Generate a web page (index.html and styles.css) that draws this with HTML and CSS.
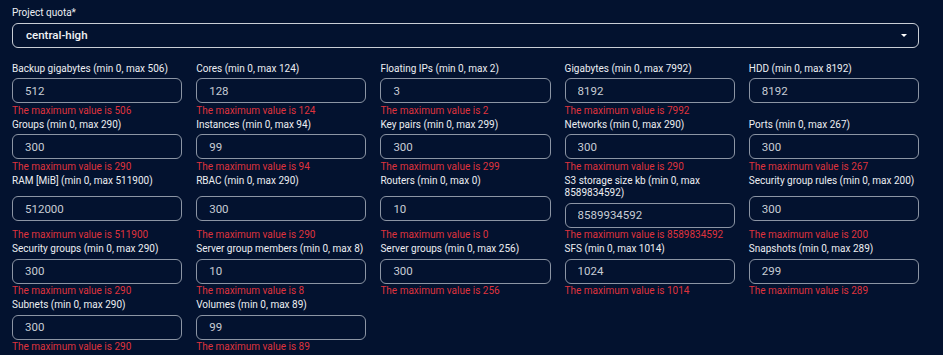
FILE: index.html
```html
<!DOCTYPE html>
<html lang="en">
<head>
    <meta charset="UTF-8">
    <meta name="viewport" content="width=device-width, initial-scale=1.0">
    <title>Project quota</title>
    <link rel="stylesheet" href="styles.css">
</head>
<body>

    <form class="quota-form">
        <label class="field-label">Project quota*</label>
        <div class="select">
            <span>central-high</span>
            <span class="caret"></span>
        </div>

        <div class="quota-grid">
            <div class="field"><label class="field-label">Backup gigabytes (min 0, max 506)</label><input class="num" value="512"><div class="error">The maximum value is 506</div></div>
            <div class="field"><label class="field-label">Cores (min 0, max 124)</label><input class="num" value="128"><div class="error">The maximum value is 124</div></div>
            <div class="field"><label class="field-label">Floating IPs (min 0, max 2)</label><input class="num" value="3"><div class="error">The maximum value is 2</div></div>
            <div class="field"><label class="field-label">Gigabytes (min 0, max 7992)</label><input class="num" value="8192"><div class="error">The maximum value is 7992</div></div>
            <div class="field"><label class="field-label">HDD (min 0, max 8192)</label><input class="num" value="8192"><div class="error"></div></div>

            <div class="field"><label class="field-label">Groups (min 0, max 290)</label><input class="num" value="300"><div class="error">The maximum value is 290</div></div>
            <div class="field"><label class="field-label">Instances (min 0, max 94)</label><input class="num" value="99"><div class="error">The maximum value is 94</div></div>
            <div class="field"><label class="field-label">Key pairs (min 0, max 299)</label><input class="num" value="300"><div class="error">The maximum value is 299</div></div>
            <div class="field"><label class="field-label">Networks (min 0, max 290)</label><input class="num" value="300"><div class="error">The maximum value is 290</div></div>
            <div class="field"><label class="field-label">Ports (min 0, max 267)</label><input class="num" value="300"><div class="error">The maximum value is 267</div></div>

            <div class="field"><label class="field-label">RAM [MiB] (min 0, max 511900)</label><input class="num" value="512000"><div class="error">The maximum value is 511900</div></div>
            <div class="field"><label class="field-label">RBAC (min 0, max 290)</label><input class="num" value="300"><div class="error">The maximum value is 290</div></div>
            <div class="field"><label class="field-label">Routers (min 0, max 0)</label><input class="num" value="10"><div class="error">The maximum value is 0</div></div>
            <div class="field"><label class="field-label">S3 storage size kb (min 0, max 8589834592)</label><input class="num" value="8589934592"><div class="error">The maximum value is 8589834592</div></div>
            <div class="field"><label class="field-label">Security group rules (min 0, max 200)</label><input class="num" value="300"><div class="error">The maximum value is 200</div></div>

            <div class="field"><label class="field-label">Security groups (min 0, max 290)</label><input class="num" value="300"><div class="error">The maximum value is 290</div></div>
            <div class="field"><label class="field-label">Server group members (min 0, max 8)</label><input class="num" value="10"><div class="error">The maximum value is 8</div></div>
            <div class="field"><label class="field-label">Server groups (min 0, max 256)</label><input class="num" value="300"><div class="error">The maximum value is 256</div></div>
            <div class="field"><label class="field-label">SFS (min 0, max 1014)</label><input class="num" value="1024"><div class="error">The maximum value is 1014</div></div>
            <div class="field"><label class="field-label">Snapshots (min 0, max 289)</label><input class="num" value="299"><div class="error">The maximum value is 289</div></div>

            <div class="field"><label class="field-label">Subnets (min 0, max 290)</label><input class="num" value="300"><div class="error">The maximum value is 290</div></div>
            <div class="field"><label class="field-label">Volumes (min 0, max 89)</label><input class="num" value="99"><div class="error">The maximum value is 89</div></div>
        </div>
    </form>

</body>
</html>
```

FILE: styles.css
```css
* { margin: 0; padding: 0; box-sizing: border-box; font-family: 'Roboto', 'Liberation Sans', sans-serif; }
body { background: #03122f; color: #e6e8ec; }

.quota-form { padding: 7px 24px 0 12px; }

.field-label {
    display: block; font-size: 10px; line-height: 12.5px; font-weight: 400;
    color: #eceef2; margin-bottom: 3px;
}

.select {
    height: 25px; border: 1px solid #c9ced6; border-radius: 6px;
    display: flex; justify-content: space-between; align-items: center;
    padding: 0 11px 0 13px; font-size: 11.5px; font-weight: 500; color: #f2f3f5;
}
.caret {
    width: 0; height: 0; border-left: 3px solid transparent; border-right: 3px solid transparent;
    border-top: 3.5px solid #ffffff;
}

.quota-grid {
    display: grid; grid-template-columns: repeat(5, 1fr); column-gap: 14px; row-gap: 2px;
    margin-top: 15px;
}
.field { display: flex; flex-direction: column; justify-content: space-between; }

.num {
    height: 25px; width: 100%; background: transparent;
    border: 1px solid #8c95a4; border-radius: 6px; outline: none;
    padding: 0 12px; font-size: 11.5px; color: #c8cdd5;
}

.error { font-size: 10px; line-height: 12px; color: #df323d; min-height: 12px; margin-top: 1.5px; }
```
